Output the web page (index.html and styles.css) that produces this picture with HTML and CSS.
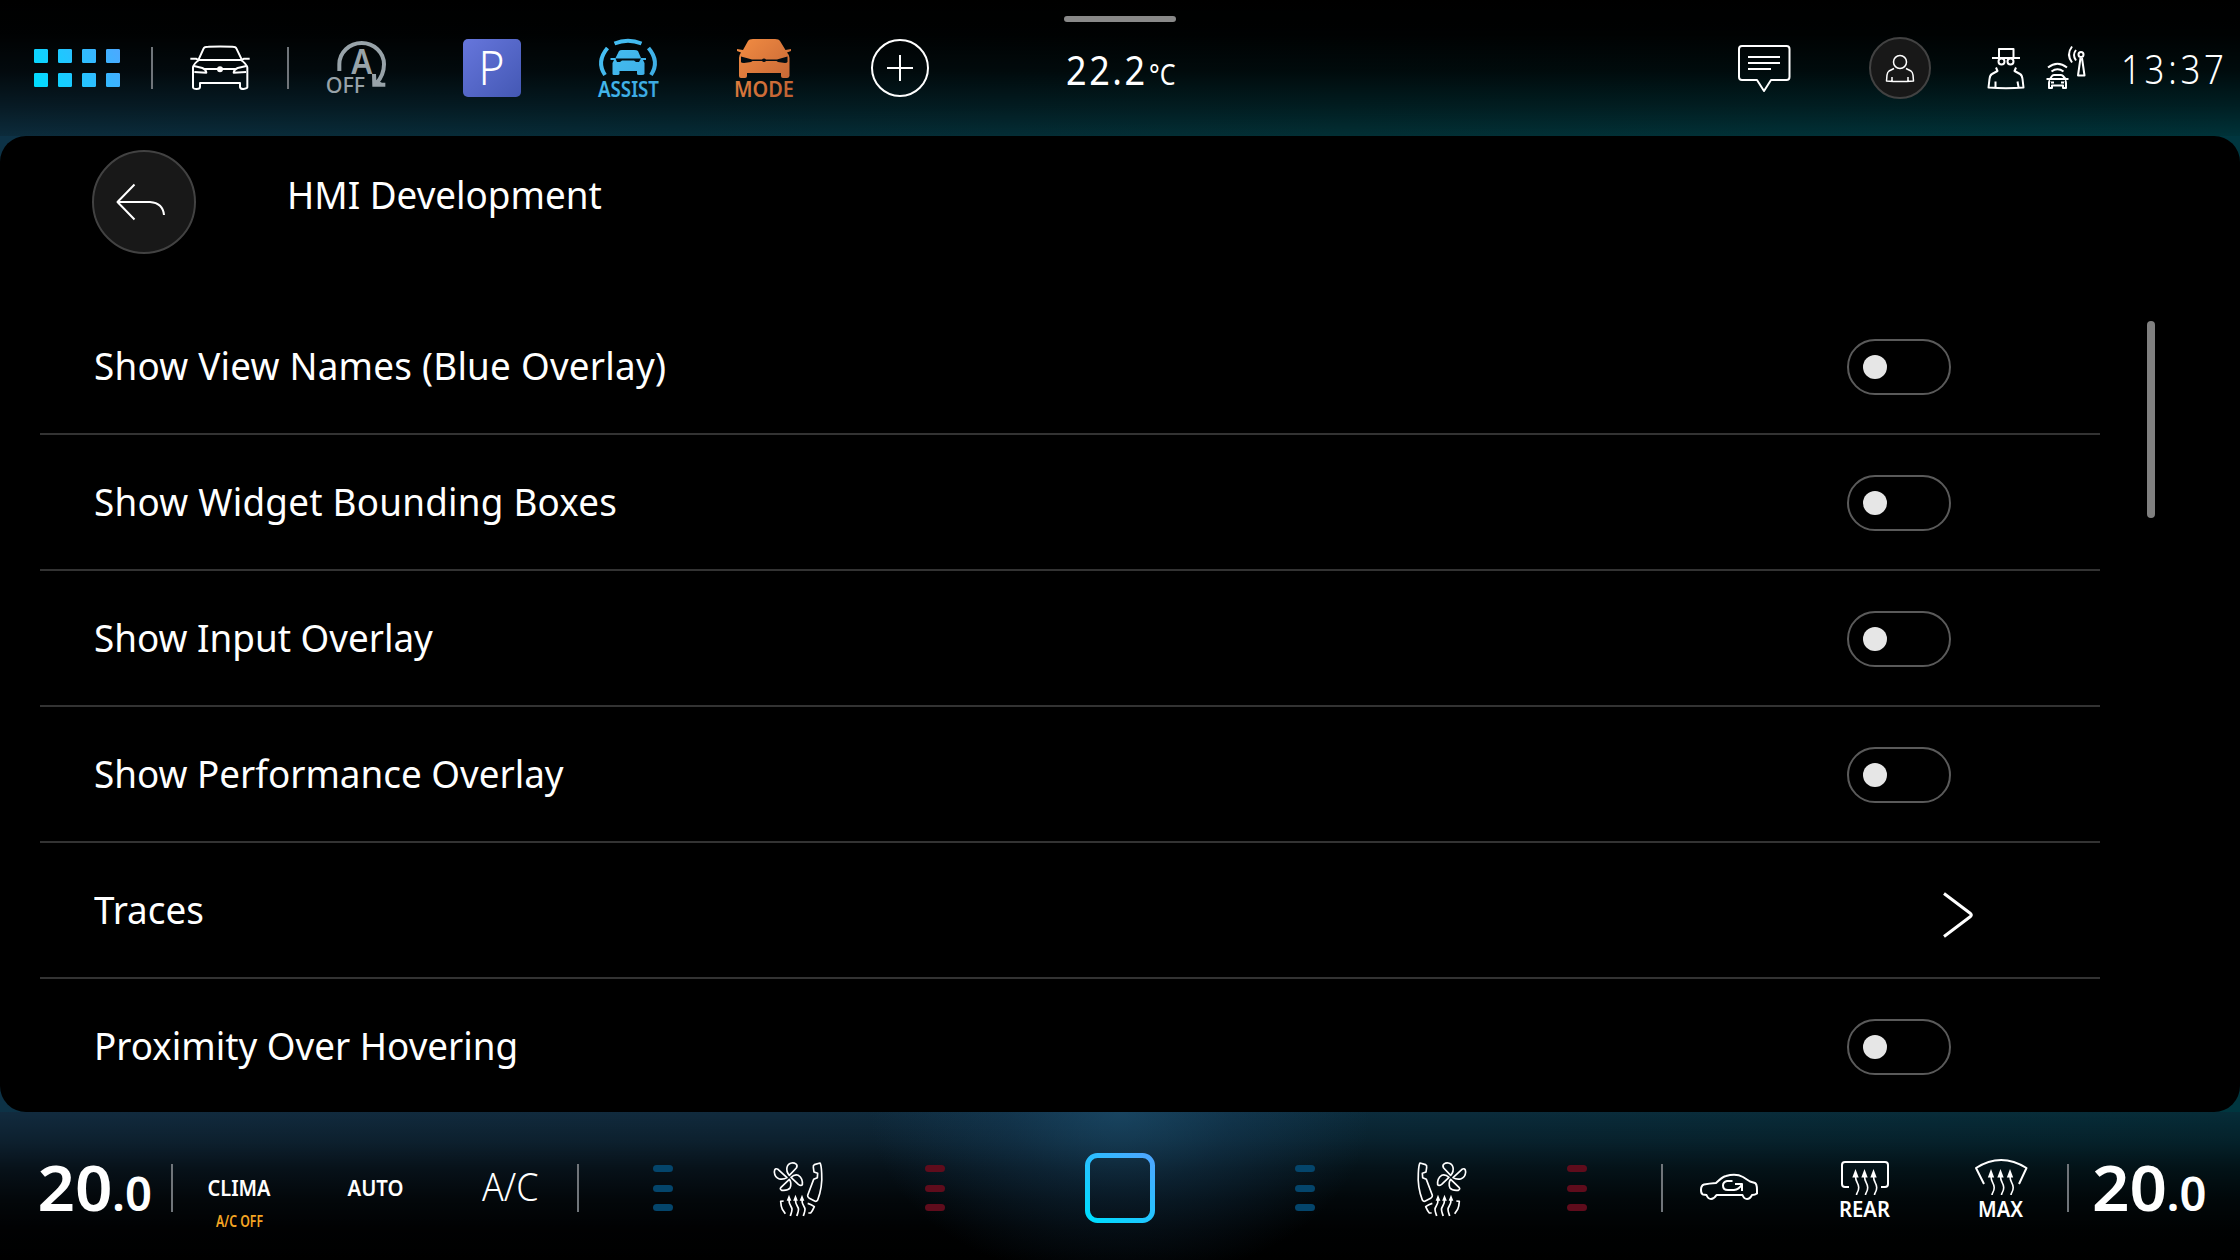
FILE: index.html
```
<!DOCTYPE html>
<html lang="en">
<head>
<meta charset="utf-8">
<title>HMI Development</title>
<link rel="stylesheet" href="styles.css">
</head>
<body>
<svg class="defs" width="0" height="0" aria-hidden="true">
  <defs>
    <linearGradient id="cyan" gradientUnits="userSpaceOnUse" x1="110" y1="260" x2="340" y2="130">
      <stop offset="0" stop-color="#00dcff"/><stop offset="1" stop-color="#4aaaff"/>
    </linearGradient>
    <linearGradient id="home" x1="0.1" y1="1" x2="0.9" y2="0">
      <stop offset="0" stop-color="#00dcff"/><stop offset="1" stop-color="#4ba8ff"/>
    </linearGradient>
    <linearGradient id="violet" x1="0" y1="0" x2="1" y2="1">
      <stop offset="0" stop-color="#6676dc"/><stop offset="1" stop-color="#4458b4"/>
    </linearGradient>
    <linearGradient id="assist" gradientUnits="userSpaceOnUse" x1="600" y1="40" x2="660" y2="98">
      <stop offset="0" stop-color="#46c2f6"/><stop offset="1" stop-color="#3ba6de"/>
    </linearGradient>
    <linearGradient id="orange" gradientUnits="userSpaceOnUse" x1="738" y1="40" x2="794" y2="98">
      <stop offset="0" stop-color="#f28c42"/><stop offset="1" stop-color="#bd5f33"/>
    </linearGradient>
    <g id="heat" class="heat">
      <path class="fill" d="M0 0 L3.200 8.500 H-3.200 Z"/>
      <path d="M0 7 C0 14 3.200 13.500 3.200 18.500 S1 23 1 26"/>
    </g>
    <g id="seat" class="seat">
      <path d="M600 219 L617 224 Q621 226 620 232 L618 246 L607 250 L608 263 L619 268 L637 316 Q638 321 632 325 L616 333 Q611 336 607 330 Q592 290 595 250 Q596 225 600 219Z"/>
      <path d="M637 340 Q626 343 617 350 Q622 362 628 369 L635 369"/>
      <path d="M709 333 L718 334 Q717 350 713 358 L704 371"/>
      <path d="M692 256 L671 234 C664 222 677 218 685 219 C699 221 706 240 692 256Z"/>
      <path d="M699 263 L726 238 Q736 232 737 246 Q736 262 722 267 Q708 269 699 263Z"/>
      <path d="M692 268 Q684 280 690 294 Q697 303 715 301 Q722 297 717 292Z"/>
      <path d="M687 262 Q676 252 665 256 Q651 265 653 284 Q657 289 665 283Z"/>
      <path class="fill" d="M654 314l7 18h-14z M673.500 314l7 18h-14z M693 314l7 18h-14z"/>
      <path d="M654 330 C655 345 645 349 645 358 S648 370 650 378 M673.500 330 C674.500 345 664.500 349 664.500 358 S667.500 370 669.500 378 M693 330 C694 345 684 349 684 358 S687 370 689 378"/>
    </g>
  </defs>
</svg>
<div class="screen">
  <header class="topbar">
    <div class="cell">
      <svg width="152" height="136" viewBox="0 0 456 408"><path fill="url(#cyan)" d="M106 147h34a4 4 0 0 1 4 4v34a4 4 0 0 1-4 4h-34a4 4 0 0 1-4-4v-34a4 4 0 0 1 4-4z m72 0h34a4 4 0 0 1 4 4v34a4 4 0 0 1-4 4h-34a4 4 0 0 1-4-4v-34a4 4 0 0 1 4-4z m72 0h34a4 4 0 0 1 4 4v34a4 4 0 0 1-4 4h-34a4 4 0 0 1-4-4v-34a4 4 0 0 1 4-4z m72 0h34a4 4 0 0 1 4 4v34a4 4 0 0 1-4 4h-34a4 4 0 0 1-4-4v-34a4 4 0 0 1 4-4z M106 219h34a4 4 0 0 1 4 4v34a4 4 0 0 1-4 4h-34a4 4 0 0 1-4-4v-34a4 4 0 0 1 4-4z m72 0h34a4 4 0 0 1 4 4v34a4 4 0 0 1-4 4h-34a4 4 0 0 1-4-4v-34a4 4 0 0 1 4-4z m72 0h34a4 4 0 0 1 4 4v34a4 4 0 0 1-4 4h-34a4 4 0 0 1-4-4v-34a4 4 0 0 1 4-4z m72 0h34a4 4 0 0 1 4 4v34a4 4 0 0 1-4 4h-34a4 4 0 0 1-4-4v-34a4 4 0 0 1 4-4z"/></svg>
    </div>
    <div class="cell divided">
      <svg width="136" height="136" viewBox="456 0 408 408" class="line" stroke-width="6">
        <path d="M596 178 L611 145 Q613 141 625 140.500 Q660 138 697 140.500 Q707 141 709 145 L725 178"/>
        <path d="M590 180H730 M571 176H588L597 181 M749 176H732L723 181"/>
        <path d="M597 180 Q580 192 579 203 V262 Q580 267 590 267 Q600 267 600 261 V249 H720 V261 Q721 267 731 267 Q741 266 742 262 V203 Q740 192 723 180"/>
        <path d="M582 198 L607 204 Q618 208 619 218 L583 216 M739 198 L713 204 Q702 208 701 218 L738 216 M612 207H708"/>
        <circle class="fill" cx="660" cy="208" r="6"/>
      </svg>
    </div>
    <div class="cell divided">
      <svg width="136" height="136" viewBox="864 0 408 408" class="muted">
        <path fill="none" stroke="#98a3a9" stroke-width="12" d="M1018 213 V193 A67 64 0 0 1 1152 193 Q1152 226 1128 252"/>
        <path d="M1116 222H1128L1129 240L1146 248H1156V260H1117Z"/>
        <text x="1054" y="222" font-size="102" font-weight="600" textLength="63" lengthAdjust="spacingAndGlyphs">A</text>
        <text x="977" y="279" font-size="67" font-weight="500" textLength="118" lengthAdjust="spacingAndGlyphs">OFF</text>
      </svg>
    </div>
    <div class="cell">
      <svg width="136" height="136" viewBox="424 0 136 136">
        <rect x="463" y="39" width="58" height="58" rx="5" fill="url(#violet)"/>
        <text class="white" x="478.500" y="85" font-size="47" font-weight="300" textLength="26" lengthAdjust="spacingAndGlyphs">P</text>
      </svg>
    </div>
    <div class="cell">
      <svg width="136" height="136" viewBox="560 0 136 136" fill="url(#assist)">
        <path fill="none" stroke="url(#assist)" stroke-width="4" d="M614.500 43.500 Q628 38 641.500 43.500 M607.500 48 Q596 61.500 605 75 M648.500 48 Q660 61.500 651 75"/>
        <path d="M619 51 Q620 50 622 50 H634 Q637 50 638 51 L641 58 H646 V60 H643 L644.500 63 V74 Q644 75 642 75 H639 Q637 75 637 74 V71 H619.500 V74 Q619 75 618 75 H614 Q612.500 75 612.500 74 V63 L614 60 H610.500 V58 H615.500 Z"/>
        <path fill="#020c12" d="M615.500 58.500H641L639 62H636L634 60.500H622L620 62H617Z"/>
        <text x="598" y="97" font-size="21.500" font-weight="600" textLength="61" lengthAdjust="spacingAndGlyphs">ASSIST</text>
      </svg>
    </div>
    <div class="cell">
      <svg width="136" height="136" viewBox="696 0 136 136" fill="url(#orange)">
        <path d="M748 41 Q749 39 753 39 H775 Q779 39 780 41 L785.500 50 L791 49 V51 L787 52.500 Q789.500 55 789.500 58 V76 Q789 78 787 78 H783 Q781 78 781 76 V73 H747 V76 Q747 78 745 78 H741 Q739 78 739 76 V58 Q739 55 741 52.500 L737 51 V49 L743 50 Z"/>
        <path fill="#020c12" d="M741 56.500 L752 59.500 H762 A2.500 2.500 0 0 1 766 59.500 H777 L787.500 56.500 V62 Q787 63 785 63 L778 62 L776.500 61 H766 A2.500 2.500 0 0 1 762 61 H752.500 L751 62 L744 63 Q741 63 741 62 Z"/>
        <text x="734" y="97" font-size="21.500" font-weight="600" textLength="60" lengthAdjust="spacingAndGlyphs">MODE</text>
      </svg>
    </div>
    <div class="cell">
      <svg width="136" height="136" viewBox="832 0 136 136" class="line" stroke-width="2"><circle cx="900" cy="68" r="28"/><path d="M887 68H913M900 55V81"/></svg>
    </div>
    <div class="cell">
      <svg width="304" height="136" viewBox="968 0 304 136" class="white">
        <rect x="1064" y="16" width="112" height="6" rx="3" fill="#898989"/>
        <text transform="translate(1066 84.500) scale(.9 1)" font-size="40" textLength="88" lengthAdjust="spacing">22.2</text>
        <text x="1149" y="84.500" font-size="29" textLength="26.500" lengthAdjust="spacingAndGlyphs">°C</text>
      </svg>
    </div>
    <div class="spacer"></div>
    <div class="cell">
      <svg width="136" height="136" viewBox="1696 0 136 136" class="line" stroke-width="2"><path d="M1742 46H1786.500Q1789.500 46 1789.500 49V77Q1789.500 80 1786.500 80H1771L1764 91L1757 80H1742Q1739 80 1739 77V49Q1739 46 1742 46Z M1748 57H1780M1748 63H1780M1748 69H1771"/></svg>
    </div>
    <div class="cell">
      <svg width="136" height="136" viewBox="1832 0 136 136" class="line" stroke-width="1.500">
        <circle cx="1900" cy="68" r="30" class="disc" stroke-width="2"/>
        <circle cx="1900" cy="62" r="6.500"/>
        <path d="M1894 68.500 L1889 71 Q1887.500 72 1887 75 L1886.500 81 Q1900 82 1913.500 81 L1913 75 Q1912.500 72 1911 71 L1906 68.500 M1892 77V81M1908 77V81"/>
      </svg>
    </div>
    <div class="cell">
      <svg width="136" height="136" viewBox="1968 0 136 136" class="line" stroke-width="2">
        <path d="M1999 58V49H2013.500V58 M1992 58H2020"/>
        <circle cx="2001.500" cy="61.500" r="3"/><circle cx="2010.500" cy="61.500" r="3"/>
        <path d="M1996 67.500 L1997.500 71 L1992 74 Q1990 75 1989.500 79 L1988.500 87.500 Q2006 89 2023.500 87.500 L2022.500 79 Q2022 75 2020 74 L2014.500 71 L2016 67.500 M1995.500 81.500V87M2017.500 81.500L2018.500 87"/>
        <path d="M2048 67.500Q2057.500 60 2067 67.500 M2051.500 71.500Q2057.500 67 2063.500 71.500"/>
        <path d="M2050 79 L2052 76 Q2052.500 75 2054 75 H2061 Q2062.500 75 2063 76 L2065.500 79 M2046.500 79H2068.500 M2050 80.500 Q2049 81 2049 83 V88 H2052 V85.500 H2063 V88 H2066 V83 Q2066 81 2065 80.500 M2051 82.500H2054M2061 82.500H2064"/>
        <circle cx="2081" cy="54.500" r="2.500"/>
        <path d="M2080.500 58 L2078 75.500 H2084.500 L2082 58 M2076 50Q2072 55 2076 60.500 M2072 46.500Q2066 54.500 2072 62.500"/>
      </svg>
    </div>
    <div class="cell">
      <svg width="136" height="136" viewBox="2104 0 136 136" class="white"><text transform="translate(2121 83.500) scale(.88 1)" font-size="39.500" font-weight="300" textLength="117">13:37</text></svg>
    </div>
  </header>

  <main class="panel">
    <div class="panel-head">
      <button class="back" aria-label="Back"><svg width="104" height="104" viewBox="92 150 104 104" class="line" stroke-width="2"><path d="M134.500 184.500L117.500 202L134.500 219.500M117.500 202H150Q163 203 164 215"/></svg></button>
      <h1 class="title">HMI Development</h1>
    </div>
    <div class="body">
      <ul class="list">
        <li class="row"><span class="label wide">Show View Names (Blue Overlay)</span><span class="toggle"></span></li>
        <li class="row"><span class="label wide">Show Widget Bounding Boxes</span><span class="toggle"></span></li>
        <li class="row"><span class="label">Show Input Overlay</span><span class="toggle"></span></li>
        <li class="row"><span class="label">Show Performance Overlay</span><span class="toggle"></span></li>
        <li class="row"><span class="label">Traces</span><svg class="chevron line" width="32" height="48" viewBox="1942 891 32 48" stroke-width="3"><path d="M1944 893.500L1970.500 913.500Q1972 915 1970.500 916.500L1944 936.500"/></svg></li>
        <li class="row last"><span class="label">Proximity Over Hovering</span><span class="toggle"></span></li>
      </ul>
      <div class="scrollbar"></div>
    </div>
  </main>

  <footer class="climate">
    <div class="group">
      <svg width="172" height="148" viewBox="0 1112 172 148" class="white"><text x="37.500" y="1210.500" font-size="64" font-weight="600" textLength="75" lengthAdjust="spacingAndGlyphs">20</text><text x="112" y="1210.500" font-size="46" font-weight="600" textLength="40" lengthAdjust="spacingAndGlyphs">.0</text></svg>
      <div class="cell divided"><svg width="136" height="148" viewBox="172 1112 136 148" class="white"><text x="207.500" y="1196" font-size="22" font-weight="600" textLength="63" lengthAdjust="spacingAndGlyphs">CLIMA</text><text class="amber" x="216" y="1227" font-size="16.500" font-weight="600" textLength="47" lengthAdjust="spacingAndGlyphs">A/C OFF</text></svg></div>
      <div class="cell"><svg width="136" height="148" viewBox="308 1112 136 148" class="white"><text x="347.500" y="1196" font-size="22" font-weight="600" textLength="56" lengthAdjust="spacingAndGlyphs">AUTO</text></svg></div>
      <div class="cell"><svg width="134" height="148" viewBox="444 1112 134 148" class="white"><text x="482" y="1201" font-size="38" font-weight="300" textLength="56.500" lengthAdjust="spacingAndGlyphs">A/C</text></svg></div>
    </div>
    <div class="group middle divided">
      <div class="cell"><div class="levels cold"><i></i><i></i><i></i></div></div>
      <div class="cell"><svg width="136" height="148" viewBox="731 1112 136 148"><use href="#seat" transform="translate(2240 0) scale(-1 1) translate(1220 1090) scale(.33333)"/></svg></div>
      <div class="cell"><div class="levels hot"><i></i><i></i><i></i></div></div>
      <div class="cell home"><svg width="70" height="70" viewBox="0 0 70 70"><rect x="2.500" y="2.500" width="65" height="65" rx="10" fill="none" stroke="url(#home)" stroke-width="5"/></svg></div>
      <div class="cell"><div class="levels cold"><i></i><i></i><i></i></div></div>
      <div class="cell"><svg width="136" height="148" viewBox="1373 1112 136 148"><use href="#seat" transform="translate(1220 1090) scale(.33333)"/></svg></div>
      <div class="cell"><div class="levels hot"><i></i><i></i><i></i></div></div>
    </div>
    <div class="group divided">
      <div class="cell"><svg width="136" height="148" viewBox="1662 1112 136 148" class="line" stroke-width="2"><path d="M1706.500 1195 L1703 1194.500 Q1701 1194 1701 1190 Q1701 1185.500 1704 1184.500 Q1709 1183.500 1716 1183 Q1722 1177 1726 1176 Q1736 1173 1743 1177 L1750 1181.500 L1755 1183 Q1757 1184 1757 1190 V1193.500 Q1755 1195 1752 1195 Q1750 1199 1747 1199 Q1744 1199 1742.500 1195 H1716.500 Q1714 1199 1711 1199 Q1708 1199 1706.500 1195Z"/><path d="M1732.500 1181H1727Q1723 1182 1723 1185.500Q1723 1190 1728 1190H1734Q1739 1189.500 1742 1184.500M1735 1184H1742V1191"/></svg></div>
      <div class="cell"><svg width="136" height="148" viewBox="1798 1112 136 148" class="line" stroke-width="2">
        <path d="M1849 1187H1845Q1842 1187 1842 1184V1165Q1842 1162 1845 1162H1885Q1888 1162 1888 1165V1184Q1888 1187 1885 1187H1881"/>
        <use href="#heat" x="1855.500" y="1169"/><use href="#heat" x="1864.500" y="1169"/><use href="#heat" x="1873.500" y="1169"/>
        <text x="1839" y="1217" font-size="21.500" font-weight="600" textLength="51" lengthAdjust="spacingAndGlyphs">REAR</text></svg></div>
      <div class="cell"><svg width="134" height="148" viewBox="1934 1112 134 148" class="line" stroke-width="2">
        <path d="M1984 1184L1976 1168Q2001 1152 2026.500 1168L2019 1184"/>
        <use href="#heat" x="1991" y="1169"/><use href="#heat" x="2000.500" y="1169"/><use href="#heat" x="2010" y="1169"/>
        <text x="1978" y="1217" font-size="21.500" font-weight="600" textLength="45" lengthAdjust="spacingAndGlyphs">MAX</text></svg></div>
      <div class="cell divided"><svg width="172" height="148" viewBox="2068 1112 172 148" class="white"><text x="2092" y="1210.500" font-size="64" font-weight="600" textLength="75" lengthAdjust="spacingAndGlyphs">20</text><text x="2166.500" y="1210.500" font-size="46" font-weight="600" textLength="40" lengthAdjust="spacingAndGlyphs">.0</text></svg></div>
    </div>
  </footer>
</div>
</body>
</html>
```
FILE: styles.css
```
* { box-sizing: border-box; }
body { margin: 0; background: #000; color: #fff; font-family: "Noto Sans", sans-serif; }
svg { display: block; flex: none; }
.defs { position: absolute; }

.screen {
  width: 2240px; height: 1260px; overflow: hidden;
  display: flex; flex-direction: column;
  background: linear-gradient(to right, #0d3246 0, #073646 30%, #00363f 100%);
}

.line { fill: none; stroke: #fff; stroke-linejoin: round; }
.line text, .white text { fill: #fff; stroke: none; }
text.white { fill: #fff; }
.fill { fill: #fff; }
.muted { fill: #98a3a9; }
.white text.amber { fill: #f5a623; }
.disc { fill: #181818; stroke: #424242; }
.seat { fill: none; stroke: #fff; stroke-width: 5; stroke-linejoin: round; }
.seat .fill, .heat .fill { fill: #fff; stroke: none; }
.heat { stroke-width: 1.6; }

.cell { display: flex; align-items: center; justify-content: center; }
.divided::before {
  content: ""; flex: none; align-self: center;
  width: 2px; height: 48px; margin: 0 -1px; background: #70757a;
}

.topbar {
  flex: none; height: 136px; display: grid;
  grid-template-columns: 152px repeat(6, 136px) 304px 1fr repeat(4, 136px);
  background:
    linear-gradient(to bottom, #000 0, rgba(0,0,0,.97) 25%, rgba(0,0,0,.8) 52%, rgba(0,0,0,.45) 78%, rgba(0,0,0,.1) 100%),
    linear-gradient(to right, #0d3042 0, #06303c 30%, #02343a 60%, #00383f 100%);
}
.topbar .divided::before { height: 42px; }

.panel {
  flex: none; height: 976px; border-radius: 26px; background: #000; overflow: hidden;
  padding: 14px 85px 0 40px;
}
.panel-head { display: flex; height: 149px; padding-left: 52px; gap: 92px; }
.back {
  width: 104px; height: 104px; padding: 0; border: 2px solid #424242; border-radius: 50%;
  background: #181818; display: flex; align-items: center; justify-content: center;
}
.title, .label {
  margin: 0; font-size: 39px; line-height: 54px; font-weight: 400; white-space: nowrap;
  transform: scaleX(.944); transform-origin: 0 50%;
}
.title { margin: 17px 0 0 -1px; }
.body { display: flex; justify-content: space-between; align-items: flex-start; }
.list { list-style: none; margin: 0; padding: 0; width: 2060px; }
.row {
  height: 136px; padding: 0 149px 0 54px; border-bottom: 2px solid #333;
  display: flex; align-items: center; justify-content: space-between;
}
.row.last { border-bottom-color: transparent; }
.label { margin-bottom: 2px; }
.label.wide { letter-spacing: .25px; }
.toggle {
  width: 104px; height: 56px; margin-top: 2px; border: 2px solid #5a5a5a; border-radius: 28px;
  display: flex; align-items: center; padding-left: 14px;
}
.toggle::before { content: ""; width: 24px; height: 24px; border-radius: 50%; background: #e6e6e6; }
.chevron { margin: 10px -23px 0 0; }
.scrollbar { width: 8px; height: 197px; margin-top: 22px; border-radius: 4px; background: #808080; }

.climate {
  flex: none; height: 148px; display: flex;
  background:
    radial-gradient(ellipse 250px 170px at 1120px 0, rgba(36,96,136,.48) 0, rgba(30,80,120,.28) 45%, rgba(10,40,70,0) 100%),
    linear-gradient(to bottom, rgba(0,0,0,.03) 0, rgba(0,0,0,.28) 20%, rgba(0,0,0,.6) 38%, rgba(0,0,0,.83) 58%, rgba(0,0,0,.97) 80%, #000 100%),
    linear-gradient(to right, #122c40 0, #112c3f 35%, #0b2d3d 65%, #062e3a 100%);
}
.group { display: flex; align-items: center; }
.group > .cell.divided::before, .group.divided::before { transform: translateY(2px); }
.middle { width: 1084px; }
.middle.divided::before { margin-right: 16px; }
.middle .cell { width: 136px; height: 148px; }
.middle .home { width: 234px; padding-top: 4px; }
.levels { display: flex; flex-direction: column; gap: 12.5px; padding-top: 4px; }
.levels i { width: 20px; height: 7px; border-radius: 3.5px; }
.cold i { background: #04456b; }
.hot i { background: #5f0c1c; }
```
